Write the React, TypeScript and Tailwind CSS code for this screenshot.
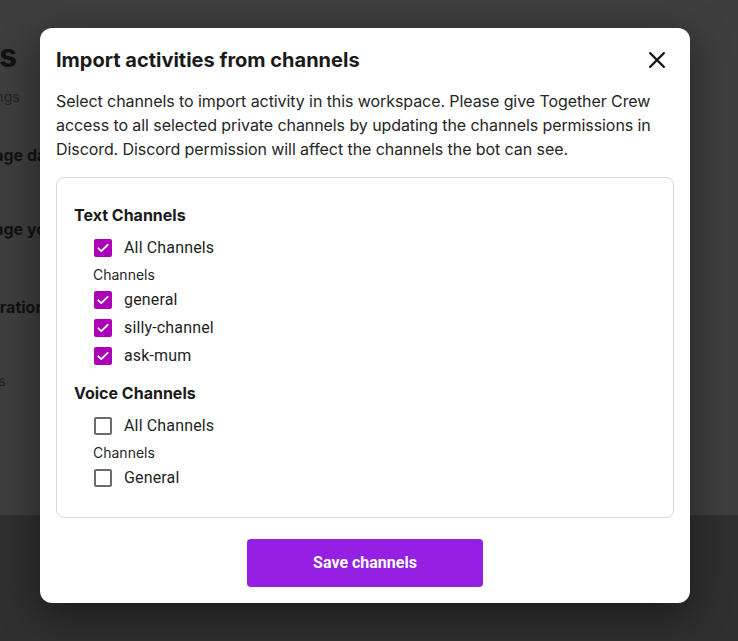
import React, { useState } from "react";

const font = { fontFamily: "Inter, 'Noto Sans', sans-serif" };
const roboto = { fontFamily: "Roboto, 'Noto Sans', sans-serif" };

function Check({ checked, label, onToggle }: { checked: boolean; label: string; onToggle: () => void }) {
  return (
    <label className="flex h-7 items-center pl-5 cursor-pointer" onClick={onToggle}>
      {checked ? (
        <span className="flex h-[18px] w-[18px] items-center justify-center rounded-[2px] bg-[#ab00b8]">
          <svg width="14" height="14" viewBox="0 0 24 24" fill="none">
            <path d="M4 12.5l5 5L20 6.5" stroke="white" strokeWidth="3.2" strokeLinecap="round" strokeLinejoin="round" />
          </svg>
        </span>
      ) : (
        <span className="h-[18px] w-[18px] rounded-[2px] border-2 border-[#6b6b6b] bg-white" />
      )}
      <span className="ml-3 text-[16px] leading-6 tracking-[0.15px] text-[#1f1f1f]" style={roboto}>{label}</span>
    </label>
  );
}

export default function App() {
  const [text, setText] = useState({ all: true, general: true, silly: true, ask: true });
  const [voice, setVoice] = useState({ all: false, general: false });

  return (
    <div className="relative h-[641px] w-[738px] overflow-hidden" style={font}>
      {/* background page (dimmed) */}
      <div className="flex h-full flex-col">
        <div className="h-[515px] bg-[#3e3e3e] pt-[36px]">
          <div className="ml-[-65px] whitespace-nowrap text-[32px] font-bold leading-10 text-[#121212]">Apps</div>
          <div className="mt-[11px] ml-[-34px] whitespace-nowrap text-[14px] leading-5 text-[#232323]">Settings</div>
          <div className="mt-[36px] ml-[-40px] whitespace-nowrap text-[16px] font-bold leading-6 text-[#121212]">Manage data</div>
          <div className="mt-[50px] ml-[-40px] whitespace-nowrap text-[16px] font-bold leading-6 text-[#121212]">Manage your</div>
          <div className="mt-[54px] ml-[-40px] whitespace-nowrap text-[16px] font-bold leading-6 text-[#121212]">Integrations</div>
          <div className="mt-[52px] ml-[-48px] whitespace-nowrap text-[14px] leading-5 text-[#232323]">Settings</div>
        </div>
        <div className="flex-1 bg-[#2f2f2f]" />
      </div>

      {/* modal */}
      <div className="absolute left-[40px] top-[28px] flex h-[575px] w-[650px] flex-col rounded-xl bg-white px-4 pb-4 pt-[17px] shadow-[0_10px_40px_rgba(0,0,0,0.45)]">
        <div className="flex h-[30px] items-center justify-between">
          <h2 className="text-[20px] font-bold leading-[30px] text-[#1a1a1a]">Import activities from channels</h2>
          <button className="mr-[5px] flex h-6 w-6 items-center justify-center text-[#1a1a1a]">
            <svg width="22" height="22" viewBox="0 0 24 24" fill="none">
              <path d="M4.5 4.5l15 15M19.5 4.5l-15 15" stroke="currentColor" strokeWidth="2.4" strokeLinecap="round" />
            </svg>
          </button>
        </div>
        <p className="mt-[14px] text-[16px] leading-6 tracking-[-0.08px] text-[#262626]">
          Select channels to import activity in this workspace. Please give Together Crew access to all selected private channels by updating the channels permissions in Discord. Discord permission will affect the channels the bot can see.
        </p>
        <div className="mt-4 flex flex-col rounded-lg border border-[#d4d7dc] pb-[25px] pl-[17px] pt-[25px]">
          <div className="text-[16px] font-bold leading-6 text-[#1a1a1a]">Text Channels</div>
          <div className="mt-[7px]">
            <Check checked={text.all} label="All Channels" onToggle={() => setText({ ...text, all: !text.all })} />
          </div>
          <div className="flex h-6 items-center pl-[19px] text-[14px] text-[#262626]">Channels</div>
          <Check checked={text.general} label="general" onToggle={() => setText({ ...text, general: !text.general })} />
          <Check checked={text.silly} label="silly-channel" onToggle={() => setText({ ...text, silly: !text.silly })} />
          <Check checked={text.ask} label="ask-mum" onToggle={() => setText({ ...text, ask: !text.ask })} />
          <div className="mt-[11px] text-[16px] font-bold leading-6 text-[#1a1a1a]">Voice Channels</div>
          <div className="mt-[7px]">
            <Check checked={voice.all} label="All Channels" onToggle={() => setVoice({ ...voice, all: !voice.all })} />
          </div>
          <div className="flex h-6 items-center pl-[19px] text-[14px] text-[#262626]">Channels</div>
          <Check checked={voice.general} label="General" onToggle={() => setVoice({ ...voice, general: !voice.general })} />
        </div>
        <div className="mt-auto flex justify-center">
          <button className="h-12 w-[236px] rounded bg-[#951fe2] text-[16px] font-bold text-white" style={roboto}>Save channels</button>
        </div>
      </div>
    </div>
  );
}
